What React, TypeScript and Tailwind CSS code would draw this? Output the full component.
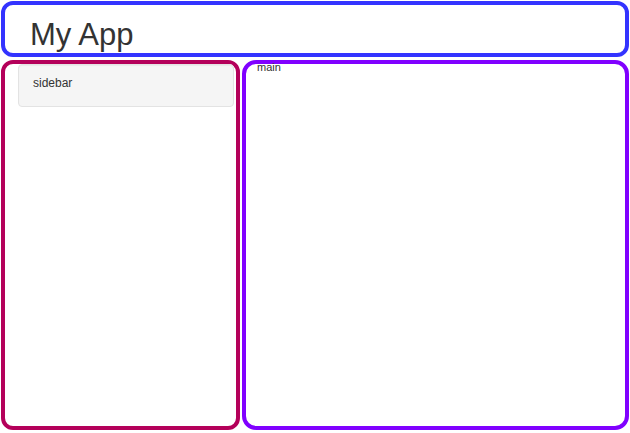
export default function App() {
  return (
    <div className="w-[630px] h-[433px] bg-white p-px flex flex-col gap-[3px] font-['Liberation_Sans',Arial,sans-serif] text-[#333]">
      <header className="h-[56px] border-4 border-[#3333ff] rounded-[12px] flex items-center pl-[25px] pt-[10px]">
        <h1 className="text-[31px] leading-none">My App</h1>
      </header>
      <div className="flex-1 flex gap-[2px] pb-[2px]">
        <aside className="w-[239px] border-4 border-[#b4005a] rounded-[12px] pl-[13px] pr-[2px]">
          <div className="h-[43px] bg-[#f5f5f5] border border-[#e3e3e3] rounded-[4px] shadow-[inset_0_1px_1px_rgba(0,0,0,0.05)] px-[14px] pt-[11px] text-[12px] leading-[14px]">
            sidebar
          </div>
        </aside>
        <main className="flex-1 border-4 border-[#8000ff] rounded-[14px] pl-[11px] text-[11px] leading-[12px]">
          <span className="relative -top-[3px]">main</span>
        </main>
      </div>
    </div>
  )
}
